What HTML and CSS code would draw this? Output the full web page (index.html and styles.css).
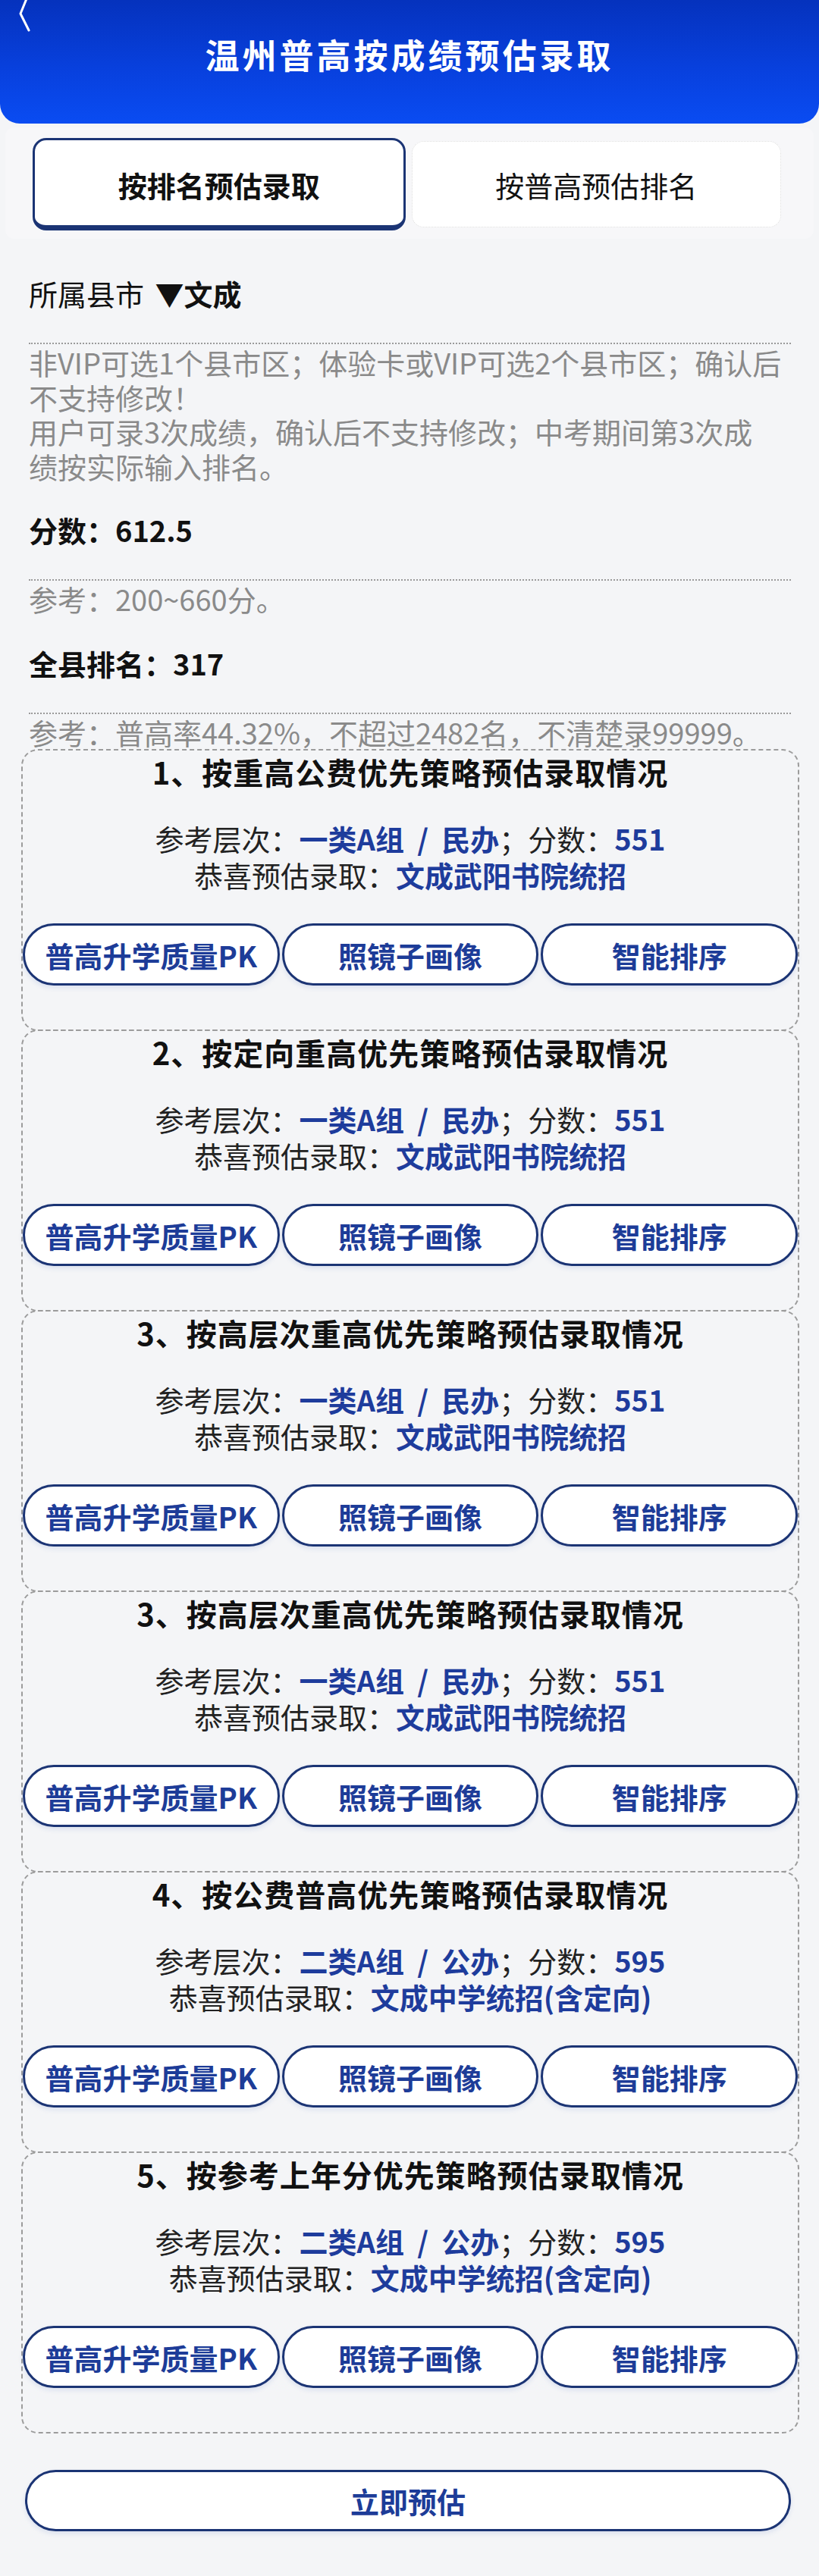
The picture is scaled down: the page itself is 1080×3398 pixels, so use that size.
FILE: index.html
```html
<!DOCTYPE html>
<html lang="zh-CN">
<head>
<meta charset="utf-8">
<title>温州普高按成绩预估录取</title>
<link rel="stylesheet" href="styles.css">
</head>
<body>
  <header class="topbar">
    <svg class="back" width="24" height="44" viewBox="0 0 24 44" aria-hidden="true">
      <polyline points="13,-4 4,18 15,40" fill="none" stroke="#ffffff" stroke-width="3" stroke-linecap="round" stroke-linejoin="round"/>
    </svg>
    <h1 class="topbar-title">温州普高按成绩预估录取</h1>
  </header>

  <nav class="tabs">
    <div class="tab tab-active">按排名预估录取</div>
    <div class="tab">按普高预估排名</div>
  </nav>

  <section class="form">
    <div class="field field-first">所属县市 <b class="picker">▼文成</b></div>
    <div class="hint">
      <div class="hint-line">非VIP可选1个县市区；体验卡或VIP可选2个县市区；确认后</div>
      <div class="hint-line">不支持修改！</div>
      <div class="hint-line">用户可录3次成绩，确认后不支持修改；中考期间第3次成</div>
      <div class="hint-line">绩按实际输入排名。</div>
    </div>

    <div class="field field-strong">分数：612.5</div>
    <div class="hint">
      <div class="hint-line">参考：200~660分。</div>
    </div>

    <div class="field field-strong">全县排名：317</div>
    <div class="hint">
      <div class="hint-line">参考：普高率44.32%，不超过2482名，不清楚录99999。</div>
    </div>
  </section>

  <section class="cards">
    <article class="card">
      <h2 class="card-title">1、按重高公费优先策略预估录取情况</h2>
      <div class="card-lines">
        <div>参考层次：<b class="val">一类A组&nbsp;&nbsp;/&nbsp;&nbsp;民办</b>；分数：<b class="val">551</b></div>
        <div>恭喜预估录取：<b class="val">文成武阳书院统招</b></div>
      </div>
      <div class="actions">
        <div class="btn">普高升学质量PK</div>
        <div class="btn">照镜子画像</div>
        <div class="btn">智能排序</div>
      </div>
    </article>

    <article class="card">
      <h2 class="card-title">2、按定向重高优先策略预估录取情况</h2>
      <div class="card-lines">
        <div>参考层次：<b class="val">一类A组&nbsp;&nbsp;/&nbsp;&nbsp;民办</b>；分数：<b class="val">551</b></div>
        <div>恭喜预估录取：<b class="val">文成武阳书院统招</b></div>
      </div>
      <div class="actions">
        <div class="btn">普高升学质量PK</div>
        <div class="btn">照镜子画像</div>
        <div class="btn">智能排序</div>
      </div>
    </article>

    <article class="card">
      <h2 class="card-title">3、按高层次重高优先策略预估录取情况</h2>
      <div class="card-lines">
        <div>参考层次：<b class="val">一类A组&nbsp;&nbsp;/&nbsp;&nbsp;民办</b>；分数：<b class="val">551</b></div>
        <div>恭喜预估录取：<b class="val">文成武阳书院统招</b></div>
      </div>
      <div class="actions">
        <div class="btn">普高升学质量PK</div>
        <div class="btn">照镜子画像</div>
        <div class="btn">智能排序</div>
      </div>
    </article>

    <article class="card">
      <h2 class="card-title">3、按高层次重高优先策略预估录取情况</h2>
      <div class="card-lines">
        <div>参考层次：<b class="val">一类A组&nbsp;&nbsp;/&nbsp;&nbsp;民办</b>；分数：<b class="val">551</b></div>
        <div>恭喜预估录取：<b class="val">文成武阳书院统招</b></div>
      </div>
      <div class="actions">
        <div class="btn">普高升学质量PK</div>
        <div class="btn">照镜子画像</div>
        <div class="btn">智能排序</div>
      </div>
    </article>

    <article class="card">
      <h2 class="card-title">4、按公费普高优先策略预估录取情况</h2>
      <div class="card-lines">
        <div>参考层次：<b class="val">二类A组&nbsp;&nbsp;/&nbsp;&nbsp;公办</b>；分数：<b class="val">595</b></div>
        <div>恭喜预估录取：<b class="val">文成中学统招(含定向)</b></div>
      </div>
      <div class="actions">
        <div class="btn">普高升学质量PK</div>
        <div class="btn">照镜子画像</div>
        <div class="btn">智能排序</div>
      </div>
    </article>

    <article class="card">
      <h2 class="card-title">5、按参考上年分优先策略预估录取情况</h2>
      <div class="card-lines">
        <div>参考层次：<b class="val">二类A组&nbsp;&nbsp;/&nbsp;&nbsp;公办</b>；分数：<b class="val">595</b></div>
        <div>恭喜预估录取：<b class="val">文成中学统招(含定向)</b></div>
      </div>
      <div class="actions">
        <div class="btn">普高升学质量PK</div>
        <div class="btn">照镜子画像</div>
        <div class="btn">智能排序</div>
      </div>
    </article>
  </section>

  <div class="submit">立即预估</div>
</body>
</html>
```

FILE: styles.css
```css
* {
  box-sizing: border-box;
}

html, body {
  margin: 0;
  padding: 0;
}

body {
  background: #f4f5f7;
  font-family: "Noto Sans CJK SC", "Noto Sans", sans-serif;
  color: #111111;
  padding-bottom: 61px;
}

/* blue title bar */
.topbar {
  position: relative;
  height: 163px;
  background: linear-gradient(180deg, #0532bd 0%, #0840dd 55%, #0a4cf2 100%);
  border-radius: 0 0 26px 26px;
}

.back {
  position: absolute;
  left: 23px;
  top: 0;
}

.topbar-title {
  margin: 0;
  padding-top: 42px;
  line-height: 60px;
  font-size: 45px;
  font-weight: 700;
  letter-spacing: 4px;
  text-align: center;
  color: #ffffff;
}

/* segmented tabs */
.tabs {
  margin: 5px 7px 0;
  height: 147px;
  padding: 14px 43px 0 36px;
  display: flex;
  align-items: flex-start;
  gap: 8px;
  background: #f7f7f9;
  border-radius: 12px;
}

.tab {
  flex: 1;
  height: 114px;
  margin-top: 4px;
  display: flex;
  align-items: center;
  justify-content: center;
  background: #ffffff;
  border: 1px dotted #dddddd;
  border-radius: 16px;
  font-size: 38px;
  color: #111111;
}

.tab-active {
  height: 122px;
  margin-top: 0;
  border: 3px solid #1b3474;
  border-bottom-width: 7px;
  border-radius: 18px;
  font-weight: 700;
  padding-top: 4px;
}

/* input rows */
.form {
  padding: 0 37px 0 38px;
}

.field {
  margin-top: 37px;
  line-height: 50px;
  font-size: 38px;
  color: #111111;
  white-space: nowrap;
}

.field-first {
  margin-top: 47px;
}

.field-strong {
  font-weight: 700;
}

.picker {
  font-weight: 700;
  margin-left: 6px;
}

.hint {
  margin-top: 40px;
  padding-top: 1px;
  border-top: 2px dotted #9a9a9a;
  font-size: 38px;
  color: #8a8a8a;
}

.hint-line {
  height: 45.5px;
  line-height: 45.5px;
  white-space: nowrap;
}

/* strategy cards */
.cards {
  margin: 0 26px 0 28px;
}

.card {
  height: 372px;
  padding-top: 3px;
  border: 2px dashed #9c9c9c;
  border-radius: 22px;
}

.card + .card {
  margin-top: -2px;
}

.card-title {
  margin: 0;
  line-height: 50px;
  font-size: 40px;
  font-weight: 700;
  letter-spacing: 1px;
  text-align: center;
  color: #111111;
}

.card-lines {
  margin-top: 39px;
  line-height: 48px;
  font-size: 38px;
  text-align: center;
  color: #222222;
}

.val {
  color: #1e3c9c;
  font-weight: 700;
}

.actions {
  margin-top: 40px;
  display: grid;
  grid-template-columns: repeat(3, 1fr);
  gap: 3px;
}

.btn {
  height: 82px;
  display: flex;
  align-items: center;
  justify-content: center;
  background: #ffffff;
  border: 3px solid #1b3474;
  border-radius: 41px;
  font-size: 38px;
  font-weight: 700;
  color: #1d3c98;
  box-shadow: 0 3px 6px rgba(40, 80, 180, 0.12);
  white-space: nowrap;
}

.submit {
  margin: 48px 37px 0 33px;
  height: 81px;
  display: flex;
  align-items: center;
  justify-content: center;
  background: #ffffff;
  border: 3px solid #1b3474;
  border-radius: 41px;
  font-size: 38px;
  font-weight: 700;
  color: #1d3c98;
  box-shadow: 0 3px 6px rgba(40, 80, 180, 0.12);
}
```
